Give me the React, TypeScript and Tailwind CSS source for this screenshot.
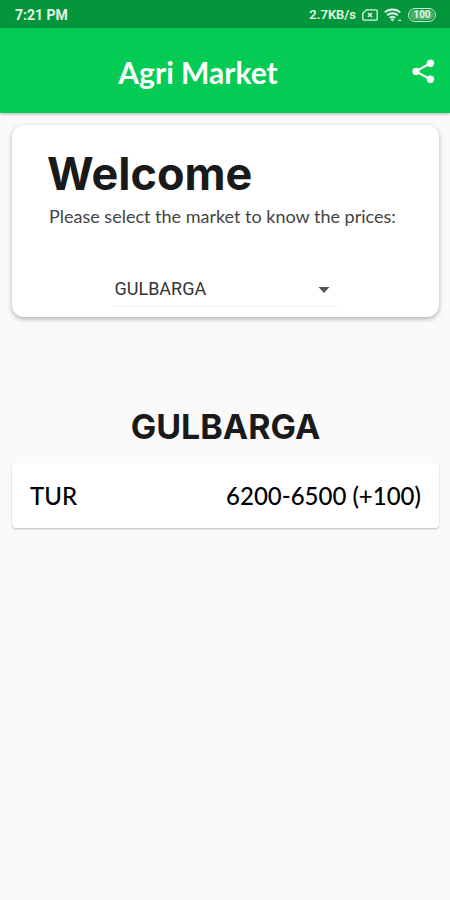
import { useState } from "react"

type Price = {
	crop: string
	price: string
}

const markets: Record<string, Price[]> = {
	GULBARGA: [{ crop: "TUR", price: "6200-6500 (+100)" }],
}

const StatusBar = () => {
	return (
		<div className="flex h-7 items-center justify-between bg-[#05963c] pt-px pr-3.5 pl-[15px] font-[Roboto,sans-serif] text-[13px] font-bold text-[#e2f6e8]">
			<time className="text-sm">7:21 PM</time>
			<div className="flex items-center gap-1.5">
				<span className="font-semibold">2.7KB/s</span>
				<svg className="h-3 w-4" viewBox="0 0 16 12" fill="none" stroke="currentColor" strokeWidth="1.3">
					<path d="M4.6.8H14a1.2 1.2 0 0 1 1.2 1.2v8a1.2 1.2 0 0 1-1.2 1.2H2A1.2 1.2 0 0 1 .8 10V4.4Z" />
					<path d="m6 4 4 4m0-4L6 8" strokeWidth="1.6" />
				</svg>
				<svg className="h-3.5 w-4.5" viewBox="0 0 18 14" fill="none" stroke="currentColor" strokeWidth="1.9">
					<path d="M.8 4.4a11.5 11.5 0 0 1 15.4 0M3.2 7.2a8 8 0 0 1 10.6 0M5.6 9.9a4.4 4.4 0 0 1 5.8 0" />
					<path d="m8.5 13.6-2-2.3a2.7 2.7 0 0 1 4 0Z" fill="currentColor" stroke="none" />
					<path d="M14 12.4h3" strokeWidth="1.3" />
				</svg>
				<span className="flex h-3.5 w-7 items-center justify-center rounded-full border border-[#c9edd3] p-px">
					<span className="flex h-full w-full items-center justify-center rounded-full bg-[#4bb06d] text-[10px] leading-none">100</span>
				</span>
			</div>
		</div>
	)
}

const Header = () => {
	return (
		<header className="relative z-10 flex h-[85px] items-center bg-[#03cb54] pr-3.5 text-white shadow-[0_1px_3px_rgba(0,0,0,0.3)]">
			<h1 className="flex-1 pt-0.5 text-center text-3xl leading-9 font-bold">Agri Market</h1>
			<button type="button" aria-label="Share" className="flex w-10 justify-end">
				<svg className="h-6 w-6" viewBox="0 0 24 24" fill="currentColor">
					<path d="M3.6 12.4 18.5 4.2M3.6 12.4 18.5 20.2" stroke="currentColor" strokeWidth="2.2" />
					<circle cx="4" cy="12.4" r="3.6" />
					<circle cx="18.4" cy="4.2" r="3.7" />
					<circle cx="18.4" cy="20.2" r="3.7" />
				</svg>
			</button>
		</header>
	)
}

export default function App() {
	const [market, setMarket] = useState("GULBARGA")

	return (
		<div className="min-h-screen bg-[#fafafa] font-[Lato,sans-serif] text-[#1a1a1a]">
			<StatusBar />
			<Header />
			<main className="pt-3 pr-[11px] pl-3">
				<section className="rounded-xl bg-white pt-[25px] pb-2.5 shadow-[0_2px_5px_rgba(0,0,0,0.3)]">
					<h2 className="px-[35px] font-[Inter,sans-serif] text-[45px] leading-12 font-bold">Welcome</h2>
					<label htmlFor="market" className="block px-[37px] pt-1 text-lg leading-7 text-[#444444]">
						Please select the market to know the prices:
					</label>
					<div className="relative mx-auto mt-9 w-[224px] border-b border-[#eeeeee]">
						<select
							id="market"
							value={market}
							onChange={(e) => setMarket(e.target.value)}
							className="block h-10 w-full appearance-none bg-transparent pt-1.5 pl-px font-[Roboto,sans-serif] text-lg text-[#333333] outline-none"
						>
							{Object.keys(markets).map((name) => (
								<option key={name} value={name}>{name}</option>
							))}
						</select>
						<svg className="pointer-events-none absolute top-5 right-2 h-2 w-3" viewBox="0 0 12 8" fill="#555555">
							<path d="M.5 1h11L6 7Z" />
						</svg>
					</div>
				</section>

				<h3 className="pt-22 text-center font-[Inter,sans-serif] text-[34px] leading-11 font-bold">{market}</h3>
				<ul className="mt-3.5">
					{markets[market].map(({ crop, price }) => (
						<li
							key={crop}
							className="flex h-[65px] items-center justify-between rounded-sm bg-white px-[18px] pt-px text-2xl font-medium text-black shadow-[0_1px_2px_rgba(0,0,0,0.25)]"
						>
							<span>{crop}</span>
							<span>{price}</span>
						</li>
					))}
				</ul>
			</main>
		</div>
	)
}
